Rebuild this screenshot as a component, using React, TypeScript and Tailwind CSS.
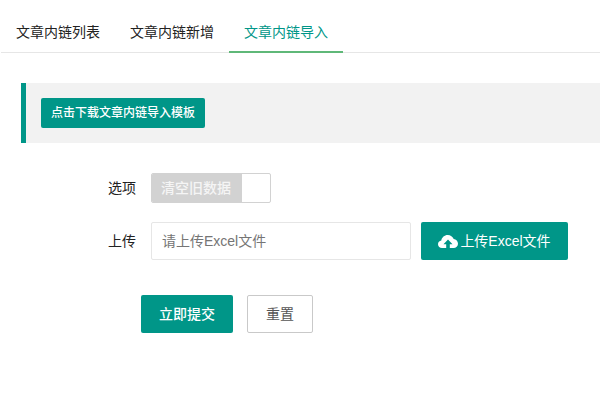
const tabs = ["文章内链列表", "文章内链新增", "文章内链导入"];

function UploadCloud() {
  return (
    <svg width="20" height="13" viewBox="0 0 20 13" className="shrink-0">
      <path fill="#fff" d="M4 13C1.800 13 0 11.300 0 9.200 0 7.300 1.400 5.800 3.300 5.500 3.800 2.400 6.500 0 9.700 0c2.800 0 5.100 1.700 6 4.100C18.100 4.400 20 6.400 20 8.700 20 11.100 18 13 15.600 13H4Z" />
      <path fill="#009688" d="M10 4.500 14.500 9.200H11.800V13H8.200V9.200H5.500L10 4.500Z" />
    </svg>
  );
}

export default function App() {
  return (
    <div className="h-[400px] w-[600px] overflow-hidden bg-white font-['Liberation_Sans','Noto_Sans_CJK_SC',sans-serif] text-[14px] text-[#333]">
      {/* Tabs */}
      <div className="ml-px flex h-[53px] border-b border-[#e6e6e6]">
        {tabs.map((t, i) => (
          <div
            key={t}
            className={
              i === 2
                ? "-mb-px h-[53px] border-b-2 border-[#5fb878] px-[15px] pt-[22px] leading-[20px] text-[#009688]"
                : "-mb-px h-[53px] px-[15px] pt-[22px] leading-[20px] text-[#222]"
            }
          >
            {t}
          </div>
        ))}
      </div>

      {/* Template download */}
      <div className="ml-[21px] mt-[30px] h-[60px] border-l-[5px] border-[#009688] bg-[#f2f2f2] py-[15px] pl-[15px]">
        <button className="h-[30px] w-[164px] rounded-[2px] bg-[#009688] text-[12px] font-medium text-white">
          点击下载文章内链导入模板
        </button>
      </div>

      {/* Form */}
      <div className="mt-[30px] flex items-center">
        <span className="ml-[108px] w-[43px] leading-[30px] text-[#222]">选项</span>
        <div className="flex h-[30px] w-[120px] overflow-hidden rounded-[2px] border border-[#d2d2d2]">
          <div className="flex w-[90px] items-center justify-center bg-[#d2d2d2] pr-[2px] text-[14px] font-medium text-[#f5f5f5]">
            清空旧数据
          </div>
        </div>
      </div>

      <div className="mt-[19px] flex items-center">
        <span className="ml-[108px] w-[43px] text-[#222]">上传</span>
        <div className="flex h-[38px] w-[260px] items-center rounded-[2px] border border-[#e6e6e6] pl-[10px] text-[#757575]">
          请上传Excel文件
        </div>
        <button className="ml-[10px] flex h-[38px] w-[147px] items-center justify-center gap-[2px] rounded-[2px] bg-[#009688] text-white">
          <UploadCloud />
          上传Excel文件
        </button>
      </div>

      <div className="mt-[35px] flex pl-[141px]">
        <button className="h-[38px] w-[92px] rounded-[2px] bg-[#009688] font-medium text-white">立即提交</button>
        <button className="ml-[14px] h-[38px] w-[66px] rounded-[2px] border border-[#c9c9c9] text-[#555]">重置</button>
      </div>
    </div>
  );
}
